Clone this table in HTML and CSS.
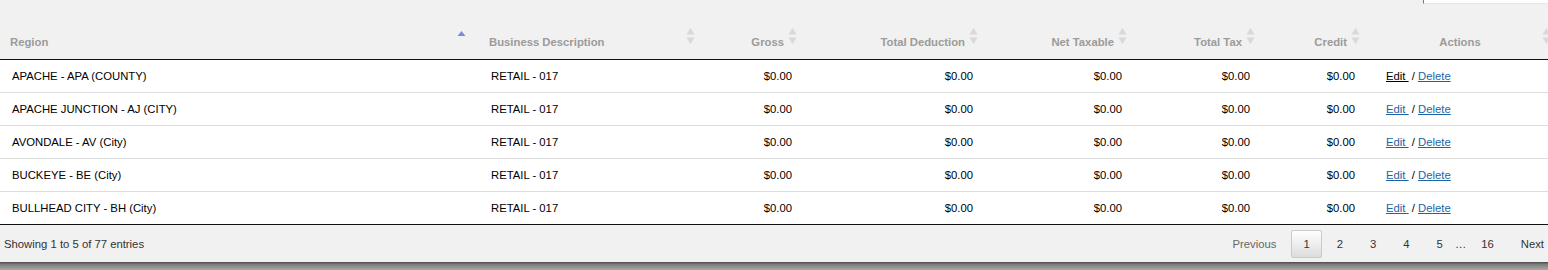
FILE: index.html
```html
<!DOCTYPE html>
<html>
<head>
<meta charset="utf-8">
<link rel="stylesheet" href="styles.css">
</head>
<body>
<div class="wrap">
  <div class="topbar">
    <div class="search"></div>
  </div>
  <table class="grid">
    <colgroup>
      <col class="c-region"><col class="c-desc"><col class="c-gross"><col class="c-ded"><col class="c-net"><col class="c-tax"><col class="c-credit"><col class="c-act">
    </colgroup>
    <thead>
      <tr>
        <th class="left sorted">Region<svg class="sort asc" width="9" height="16" viewBox="0 0 9 16"><polygon points="4.5,2 8.5,7 0.5,7"/></svg></th>
        <th class="left">Business Description<svg class="sort" width="9" height="16" viewBox="0 0 9 16"><polygon points="4.5,0 8.5,6.5 0.5,6.5"/><polygon points="0.5,9.5 8.5,9.5 4.5,16"/></svg></th>
        <th class="num">Gross<svg class="sort" width="9" height="16" viewBox="0 0 9 16"><polygon points="4.5,0 8.5,6.5 0.5,6.5"/><polygon points="0.5,9.5 8.5,9.5 4.5,16"/></svg></th>
        <th class="num">Total Deduction<svg class="sort" width="9" height="16" viewBox="0 0 9 16"><polygon points="4.5,0 8.5,6.5 0.5,6.5"/><polygon points="0.5,9.5 8.5,9.5 4.5,16"/></svg></th>
        <th class="num">Net Taxable<svg class="sort" width="9" height="16" viewBox="0 0 9 16"><polygon points="4.5,0 8.5,6.5 0.5,6.5"/><polygon points="0.5,9.5 8.5,9.5 4.5,16"/></svg></th>
        <th class="num">Total Tax<svg class="sort" width="9" height="16" viewBox="0 0 9 16"><polygon points="4.5,0 8.5,6.5 0.5,6.5"/><polygon points="0.5,9.5 8.5,9.5 4.5,16"/></svg></th>
        <th class="num">Credit<svg class="sort" width="9" height="16" viewBox="0 0 9 16"><polygon points="4.5,0 8.5,6.5 0.5,6.5"/><polygon points="0.5,9.5 8.5,9.5 4.5,16"/></svg></th>
        <th class="center">Actions<svg class="sort" width="9" height="16" viewBox="0 0 9 16"><polygon points="4.5,0 8.5,6.5 0.5,6.5"/><polygon points="0.5,9.5 8.5,9.5 4.5,16"/></svg></th>
      </tr>
    </thead>
    <tbody>
      <tr>
        <td>APACHE - APA (COUNTY)</td><td>RETAIL - 017</td><td class="num">$0.00</td><td class="num">$0.00</td><td class="num">$0.00</td><td class="num">$0.00</td><td class="num">$0.00</td>
        <td class="act"><a href="#" class="visited">Edit&nbsp;</a> / <a href="#">Delete</a></td>
      </tr>
      <tr>
        <td>APACHE JUNCTION - AJ (CITY)</td><td>RETAIL - 017</td><td class="num">$0.00</td><td class="num">$0.00</td><td class="num">$0.00</td><td class="num">$0.00</td><td class="num">$0.00</td>
        <td class="act"><a href="#">Edit&nbsp;</a> / <a href="#">Delete</a></td>
      </tr>
      <tr>
        <td>AVONDALE - AV (City)</td><td>RETAIL - 017</td><td class="num">$0.00</td><td class="num">$0.00</td><td class="num">$0.00</td><td class="num">$0.00</td><td class="num">$0.00</td>
        <td class="act"><a href="#">Edit&nbsp;</a> / <a href="#">Delete</a></td>
      </tr>
      <tr>
        <td>BUCKEYE - BE (City)</td><td>RETAIL - 017</td><td class="num">$0.00</td><td class="num">$0.00</td><td class="num">$0.00</td><td class="num">$0.00</td><td class="num">$0.00</td>
        <td class="act"><a href="#">Edit&nbsp;</a> / <a href="#">Delete</a></td>
      </tr>
      <tr>
        <td>BULLHEAD CITY - BH (City)</td><td>RETAIL - 017</td><td class="num">$0.00</td><td class="num">$0.00</td><td class="num">$0.00</td><td class="num">$0.00</td><td class="num">$0.00</td>
        <td class="act"><a href="#">Edit&nbsp;</a> / <a href="#">Delete</a></td>
      </tr>
    </tbody>
  </table>
  <div class="footer">
    <div class="info">Showing 1 to 5 of 77 entries</div>
    <div class="pager">
      <span class="pbtn disabled">Previous</span>
      <span class="pbtn current">1</span>
      <span class="pbtn">2</span>
      <span class="pbtn">3</span>
      <span class="pbtn">4</span>
      <span class="pbtn">5</span>
      <span class="ellipsis">…</span>
      <span class="pbtn">16</span>
      <span class="pbtn">Next</span>
    </div>
  </div>
  <div class="shadow"></div>
</div>
</body>
</html>
```

FILE: styles.css
```css
html, body {
  margin: 0;
  padding: 0;
}
body {
  background: #f1f1f1;
  font-family: "Liberation Sans", Arial, Helvetica, sans-serif;
  font-size: 11.3px;
  color: #000;
  overflow: hidden;
  width: 1548px;
  height: 270px;
}
.wrap {
  width: 1556px;
}
.topbar {
  height: 22px;
  display: flex;
  justify-content: flex-end;
}
.search {
  width: 133px;
  height: 4px;
  background: #fff;
  border-left: 1px solid #7a7a7a;
  border-bottom: 1px solid #e6e6e6;
  box-sizing: border-box;
}
.grid {
  width: 1556px;
  table-layout: fixed;
  border-collapse: separate;
  border-spacing: 0;
}
.c-region { width: 479px; }
.c-desc { width: 221px; }
.c-gross { width: 102px; }
.c-ded { width: 181px; }
.c-net { width: 149px; }
.c-tax { width: 128px; }
.c-credit { width: 105px; }
.c-act { width: 191px; }

.grid th {
  position: relative;
  height: 38px;
  padding: 2px 18px 0 10px;
  box-sizing: border-box;
  font-weight: bold;
  color: #9b9b9b;
  text-align: left;
  border-bottom: 1px solid #111;
  vertical-align: middle;
  white-space: nowrap;
}
.grid th.num { text-align: right; }
.grid th.center { text-align: center; padding-left: 17px; }
.sort {
  position: absolute;
  right: 5px;
  top: 6px;
  fill: #d9d9d9;
}
.sort.asc {
  fill: #8088d8;
  right: 13px;
  top: 7px;
}
.grid td {
  background: #fff;
  height: 33px;
  padding: 0 10px 0 12px;
  box-sizing: border-box;
  border-bottom: 1px solid #dddddd;
  white-space: nowrap;
  vertical-align: middle;
}
.grid tbody tr:last-child td { border-bottom-color: #111; }
.grid td.num { text-align: right; }
.grid td.act { padding-left: 21px; }
.grid a {
  color: #1c64a6;
  text-decoration: underline;
}
.grid a.visited { color: #000; }

.footer {
  height: 37px;
  display: flex;
  justify-content: space-between;
  align-items: center;
}
.info {
  padding-left: 4px;
  color: #333;
}
.pager {
  display: flex;
  align-items: center;
}
.pbtn {
  display: inline-block;
  padding: 7px 11px;
  line-height: 12px;
  border: 1px solid transparent;
  border-radius: 2px;
  margin-left: 3px;
  color: #333;
}
.pbtn.disabled { color: #666; }
.pbtn.current {
  border: 1px solid #cacaca;
  background: linear-gradient(to bottom, #ffffff 0%, #dcdcdc 100%);
}
.ellipsis {
  padding: 0;
  color: #333;
}
.shadow {
  height: 8px;
  background: linear-gradient(to bottom, #4a4a4a 0%, #7d7d7d 30%, #a9a9a9 100%);
}
```
